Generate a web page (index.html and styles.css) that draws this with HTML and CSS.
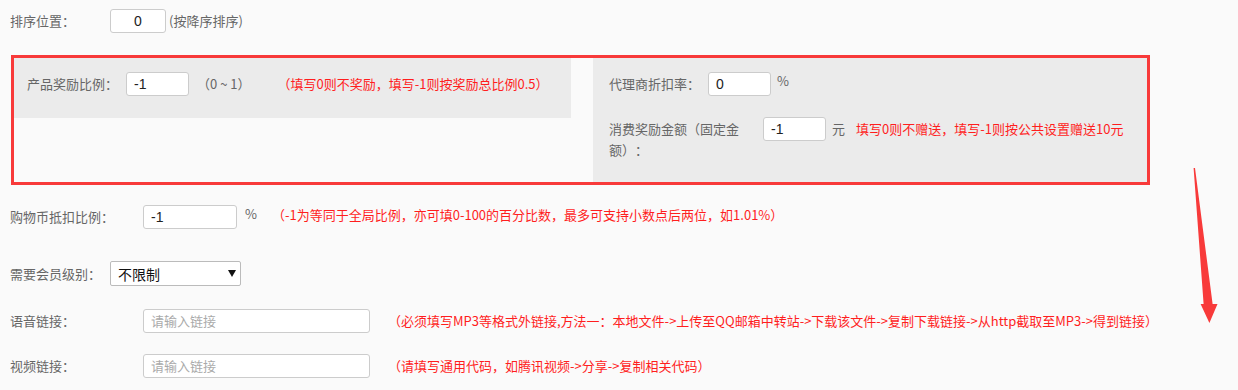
FILE: index.html
```html
<!DOCTYPE html>
<html lang="zh-CN">
<head>
<meta charset="utf-8">
<title>设置</title>
<link rel="stylesheet" href="styles.css">
</head>
<body>
<div class="form">
  <div class="row row-sort">
    <label class="lbl lbl-short">排序位置：</label>
    <input class="ipt ipt-sort" type="text" value="0">
    <span class="hint hint-tight">(按降序排序)</span>
  </div>

  <div class="hl-box">
    <div class="panel panel-left">
      <div class="line">
        <label class="lbl">产品奖励比例：</label>
        <input class="ipt ipt-sm" type="text" value="-1">
        <span class="hint hint-range">（0 ~ 1）</span>
        <span class="warn warn-left">（填写0则不奖励，填写-1则按奖励总比例0.5）</span>
      </div>
    </div>
    <div class="panel panel-right">
      <div class="line">
        <label class="lbl">代理商折扣率：</label>
        <input class="ipt ipt-sm" type="text" value="0">
        <span class="unit">%</span>
      </div>
      <div class="line line-wrap">
        <label class="lbl lbl-wrap">消费奖励金额（固定金额）：</label>
        <input class="ipt ipt-sm" type="text" value="-1">
        <span class="unit unit-yuan">元</span>
        <span class="warn warn-yuan">填写0则不赠送，填写-1则按公共设置赠送10元</span>
      </div>
    </div>
  </div>

  <div class="row row-coin">
    <label class="lbl lbl-long">购物币抵扣比例：</label>
    <input class="ipt ipt-md" type="text" value="-1">
    <span class="unit unit-pct">%</span>
    <span class="warn warn-coin">（-1为等同于全局比例，亦可填0-100的百分比数，最多可支持小数点后两位，如1.01%）</span>
  </div>

  <div class="row row-level">
    <label class="lbl lbl-short">需要会员级别：</label>
    <div class="select">
      <span class="select-text">不限制</span>
      <svg class="select-caret" width="8" height="7" viewBox="0 0 8 7"><polygon points="0,0 8,0 4,7" fill="#111"/></svg>
    </div>
  </div>

  <div class="row row-voice">
    <label class="lbl lbl-long">语音链接：</label>
    <input class="ipt ipt-lg" type="text" placeholder="请输入链接">
    <span class="warn warn-link">（必须填写MP3等格式外链接,方法一：本地文件-&gt;上传至QQ邮箱中转站-&gt;下载该文件-&gt;复制下载链接-&gt;从http截取至MP3-&gt;得到链接）</span>
  </div>

  <div class="row row-video">
    <label class="lbl lbl-long">视频链接：</label>
    <input class="ipt ipt-lg" type="text" placeholder="请输入链接">
    <span class="warn warn-link">（请填写通用代码，如腾讯视频-&gt;分享-&gt;复制相关代码）</span>
  </div>
</div>

<svg class="annot-arrow" width="1238" height="390" viewBox="0 0 1238 390">
  <polygon points="1193.6,168 1195,168 1212.6,304 1217.5,304 1209.4,323 1200.6,304 1203.6,304" fill="#f83a3a"/>
</svg>
</body>
</html>
```

FILE: styles.css
```css
html, body {
  margin: 0;
  padding: 0;
}

body {
  background: #fafafa;
  color: #666;
  font-family: "Microsoft YaHei", "Noto Sans CJK SC", "Noto Sans", sans-serif;
  font-size: 13px;
  line-height: 20px;
  text-spacing-trim: space-all;
  position: relative;
  width: 1238px;
  height: 390px;
  overflow: hidden;
}

.form {
  padding-top: 9px;
}

.row {
  display: flex;
  align-items: center;
  padding-left: 10px;
  height: 24px;
}

.lbl {
  flex: none;
  white-space: nowrap;
}

.lbl-short {
  width: 100px;
}

.lbl-long {
  width: 133px;
}

.ipt {
  flex: none;
  box-sizing: border-box;
  height: 24px;
  border: 1px solid #ccc;
  border-radius: 3px;
  background: #fff;
  padding: 0 7px;
  font-family: "Liberation Sans", Arial, sans-serif;
  font-size: 14px;
  color: #222;
  outline: none;
}

.ipt::placeholder {
  color: #aaa;
  font-family: "Microsoft YaHei", "Noto Sans CJK SC", sans-serif;
  font-size: 13px;
}

.ipt-sort {
  width: 56px;
  text-align: center;
}

.ipt-sm {
  width: 63px;
  margin-left: 8px;
}

.ipt-md {
  width: 94px;
}

.ipt-lg {
  width: 227px;
}

.hint {
  color: #666;
  white-space: nowrap;
}

.hint-tight {
  margin-left: 3px;
}

.hint-range {
  margin-left: 8px;
}

.warn {
  color: #ff1e1e;
  white-space: nowrap;
}

.warn-left {
  margin-left: 27px;
}

.unit {
  margin-left: 6px;
  align-self: flex-start;
  line-height: 18px;
}

.unit-yuan {
  line-height: 24px;
}

.warn-yuan {
  margin-left: 11px;
  line-height: 24px;
}

/* highlighted group */
.hl-box {
  margin: 22px 0 0 11px;
  width: 1139px;
  height: 130px;
  box-sizing: border-box;
  border: 3px solid #f83a3a;
  display: flex;
  gap: 22px;
}

.panel {
  background: #ebebeb;
  box-sizing: border-box;
}

.panel-left {
  width: 557px;
  height: 60px;
  padding: 14px 0 0 13px;
}

.panel-right {
  flex: 1;
  padding: 14px 0 0 16px;
}

.line {
  display: flex;
  align-items: center;
  height: 24px;
}

.line-wrap {
  margin-top: 21px;
  align-items: flex-start;
  height: auto;
}

.lbl-wrap {
  white-space: normal;
  width: 140px;
  margin-right: 14px;
  line-height: 21px;
  padding-top: 1px;
}

.line-wrap .ipt-sm {
  margin-left: 0;
}

/* lower rows */
.row-coin {
  margin-top: 20px;
}

.unit-pct {
  margin-left: 8px;
}

.warn-coin {
  margin-left: 15px;
  align-self: flex-start;
  line-height: 20px;
}

.row-level {
  margin-top: 32px;
  height: 25px;
}

.select {
  flex: none;
  box-sizing: border-box;
  width: 131px;
  height: 25px;
  border: 1px solid #bbb;
  border-radius: 2px;
  background: #fff;
  display: flex;
  align-items: center;
  justify-content: space-between;
  padding: 0 4px 0 7px;
  color: #111;
  font-size: 14px;
}

.select-text {
  line-height: 25px;
  padding-top: 2px;
}

.select-caret {
  display: block;
}

.row-voice {
  margin-top: 23px;
}

.row-video {
  margin-top: 21px;
}

.warn-link {
  margin-left: 18px;
}

.annot-arrow {
  position: absolute;
  left: 0;
  top: 0;
  pointer-events: none;
}
```
